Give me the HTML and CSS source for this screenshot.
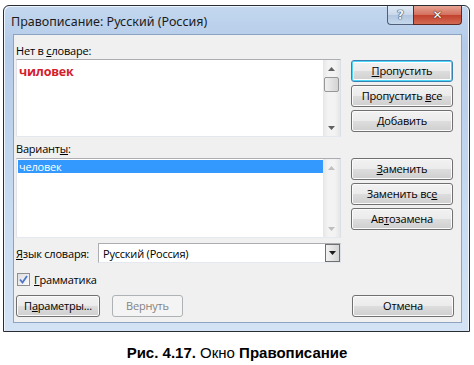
FILE: index.html
```html
<!DOCTYPE html>
<html lang="ru">

<head>
    <meta charset="UTF-8" />
    <title>Правописание</title>
    <link rel="stylesheet" href="styles.css">
</head>

<body>
    <div class="window">
        <div class="titlebar">
            <span class="title">Правописание: Русский (Россия)</span>
            <div class="caption-btns">
                <span class="cap-help">?</span>
                <span class="cap-exit">✕</span>
            </div>
        </div>

        <div class="client">
            <p class="label first">Нет в <u>с</u>ловаре:</p>
            <div class="row">
                <div class="box">
                    <div class="box-text"><span class="bad-word">чиловек</span></div>
                    <div class="scrollbar">
                        <div class="arrow"><svg width="7" height="4" viewBox="0 0 7 4"><polygon points="0,4 7,4 3.5,0" fill="#606060" /></svg></div>
                        <div class="thumb"></div>
                        <div class="track"></div>
                        <div class="arrow"><svg width="7" height="4" viewBox="0 0 7 4"><polygon points="0,0 7,0 3.5,4" fill="#606060" /></svg></div>
                    </div>
                </div>
                <div class="btn-col top">
                    <button class="btn default"><u>П</u>ропустить</button>
                    <button class="btn">Пропустить <u>в</u>се</button>
                    <button class="btn"><u>Д</u>обавить</button>
                </div>
            </div>

            <p class="label second">Вариант<u>ы</u>:</p>
            <div class="row">
                <div class="box list">
                    <div class="box-text">
                        <div class="selected">человек</div>
                    </div>
                    <div class="scrollbar">
                        <div class="arrow"><svg width="7" height="4" viewBox="0 0 7 4"><polygon points="0,4 7,4 3.5,0" fill="#bfbfbf" /></svg></div>
                        <div class="track"></div>
                        <div class="arrow"><svg width="7" height="4" viewBox="0 0 7 4"><polygon points="0,0 7,0 3.5,4" fill="#bfbfbf" /></svg></div>
                    </div>
                </div>
                <div class="btn-col">
                    <button class="btn"><u>З</u>аменить</button>
                    <button class="btn">Заменить вс<u>е</u></button>
                    <button class="btn">Ав<u>т</u>озамена</button>
                </div>
            </div>

            <div class="lang-row">
                <span class="lang-label"><u>Я</u>зык словаря:</span>
                <div class="combo">
                    <span class="combo-text">Русский (Россия)</span>
                    <div class="combo-btn"><svg width="7" height="4" viewBox="0 0 7 4"><polygon points="0,0 7,0 3.5,4" fill="#1a1a1a" /></svg></div>
                </div>
            </div>

            <div class="check-row">
                <div class="checkbox">
                    <svg width="9" height="9" viewBox="0 0 9 9"><path d="M1 4.5 L3.5 7.5 L8 1" fill="none" stroke="#4f74c8" stroke-width="1.8" /></svg>
                </div>
                <span><u>Г</u>рамматика</span>
            </div>

            <div class="bottom-row">
                <button class="btn params">П<u>а</u>раметры...</button>
                <button class="btn disabled-btn">Вернуть</button>
                <button class="btn cancel">Отмена</button>
            </div>
        </div>
    </div>

    <p class="caption"><b>Рис. 4.17.</b> Окно <b>Правописание</b></p>
</body>

</html>
```

FILE: styles.css
```css
* {
    margin: 0;
    padding: 0;
    box-sizing: border-box;
}

body {
    width: 474px;
    height: 365px;
    background: #ffffff;
    font-family: "Open Sans", "Noto Sans", sans-serif;
    font-size: 11px;
    letter-spacing: -0.2px;
    color: #000;
    overflow: hidden;
}

u {
    text-decoration: underline;
    text-underline-offset: 1px;
}

.window {
    margin: 5px 4px 0 3px;
    height: 327px;
    border: 1px solid #2a2d33;
    border-radius: 6px 6px 0 0;
    background: linear-gradient(#c3d7ef, #b4cbe8 12%, #c6daf1 60%, #d3e3f5);
    padding-bottom: 8px;
    box-shadow: inset 1px 1px 0 #eef5fc, inset -1px 0 0 #eef5fc;
}

.titlebar {
    height: 28px;
    display: flex;
    align-items: flex-start;
    padding: 0 7px;
}

.title {
    flex: 1;
    font-family: "Noto Sans", sans-serif;
    font-size: 12.5px;
    letter-spacing: 0;
    line-height: 16px;
    margin-top: 8px;
    color: #1c1c1c;
}

.caption-btns {
    display: flex;
    height: 19px;
}

.cap-help,
.cap-exit {
    display: flex;
    align-items: center;
    justify-content: center;
    height: 19px;
    font-family: "DejaVu Sans", sans-serif;
    font-weight: bold;
    letter-spacing: 0;
}

.cap-help {
    width: 26px;
    border: 1px solid #4f5f77;
    border-top: 0;
    border-right: 0;
    border-radius: 0 0 0 4px;
    background: linear-gradient(#e2ebf5, #c7d7ea 50%, #b2c6de 51%, #c5d8ec);
    font-size: 12px;
    color: #eef3f9;
    text-shadow: 0 0 1px #324866, 0 0 1px #324866, 0 0 1px #324866;
}

.cap-exit {
    width: 49px;
    border: 1px solid #5e2a22;
    border-top: 0;
    border-radius: 0 0 4px 0;
    background: linear-gradient(#e8a493, #d36e5c 50%, #c2412e 51%, #d26a52);
    font-size: 12px;
    color: #ffffff;
    text-shadow: 0 0 1px #5a1a12, 0 0 1px #5a1a12, 0 0 1px #5a1a12;
}

.client {
    margin: 0 7px 0 9px;
    height: 289px;
    border: 1px solid #8da3c1;
    background: #f0f0f0;
    padding: 0 7px 0 2px;
}

.label {
    line-height: 14px;
}

.label.first {
    padding-top: 9px;
    margin-bottom: 1px;
}

.label.second {
    padding-top: 5px;
    margin-bottom: 2px;
}

.row {
    display: flex;
    gap: 10px;
}

.box {
    width: 325px;
    height: 78px;
    border: 1px solid #abadb3;
    border-right-color: #dbdfe6;
    border-bottom-color: #e3e9ef;
    border-left-color: #e2e3ea;
    background: #fff;
    display: flex;
}

.box.list {
    height: 80px;
}

.box-text {
    flex: 1;
    padding: 1px 0 0 1px;
}

.bad-word {
    display: block;
    padding: 3px 0 0 1px;
    color: #d4202c;
    font-weight: bold;
    font-size: 12.5px;
    line-height: 16px;
}

.selected {
    background: #3399ff;
    color: #fff;
    line-height: 13px;
    height: 13px;
    padding-left: 1px;
}

.scrollbar {
    width: 17px;
    background: linear-gradient(90deg, #e6e6e6, #f3f3f3 30%, #f3f3f3 70%, #e6e6e6);
    display: flex;
    flex-direction: column;
}

.arrow {
    height: 17px;
    display: flex;
    align-items: center;
    justify-content: center;
}

.thumb {
    height: 15px;
    margin: 0 1px 0 1px;
    border: 1px solid #979797;
    border-radius: 2px;
    background: linear-gradient(90deg, #f0f0f0, #e2e2e2 50%, #d4d4d4);
}

.track {
    flex: 1;
}

.btn-col {
    display: flex;
    flex-direction: column;
    gap: 3px;
}

.btn-col.top {
    margin-top: 1px;
}

.btn {
    width: 102px;
    height: 22px;
    border: 1px solid #707070;
    border-radius: 3px;
    background: linear-gradient(#f2f2f2, #ebebeb 50%, #dddddd 51%, #cfcfcf);
    box-shadow: inset 0 0 0 1px #fbfbfb;
    font-family: "Open Sans", "Noto Sans", sans-serif;
    font-size: 11px;
    letter-spacing: -0.2px;
    line-height: 18px;
    color: #000;
}

.btn.default {
    border-color: #3c7fb1;
    box-shadow: inset 0 0 0 1px #48d7f8, inset 0 0 0 2px #ffffff;
}

.lang-row {
    display: flex;
    align-items: center;
    margin-top: 5px;
    height: 20px;
}

.lang-label {
    width: 82px;
    flex-shrink: 0;
    white-space: nowrap;
}

.combo {
    width: 243px;
    height: 20px;
    border: 1px solid #abadb3;
    border-right-color: #dbdfe6;
    border-bottom-color: #e3e9ef;
    background: #fff;
    display: flex;
    align-items: center;
    justify-content: space-between;
    padding-left: 4px;
}

.combo-btn {
    width: 15px;
    height: 18px;
    border: 1px solid #707070;
    background: linear-gradient(90deg, #f2f2f2, #e4e4e4 50%, #d4d4d4);
    display: flex;
    align-items: center;
    justify-content: center;
}

.check-row {
    display: flex;
    align-items: center;
    gap: 4px;
    margin-top: 10px;
    height: 13px;
    padding-left: 1px;
}

.checkbox {
    width: 13px;
    height: 13px;
    border: 1px solid #8e8f8f;
    background: linear-gradient(135deg, #dedede, #fbfbfb);
    display: flex;
    align-items: center;
    justify-content: center;
}

.bottom-row {
    display: flex;
    margin-top: 9px;
}

.btn.params {
    width: 84px;
}

.btn.disabled-btn {
    width: 71px;
    margin-left: 12px;
    border-color: #adb2b5;
    background: #f4f4f4;
    box-shadow: none;
    color: #838383;
}

.btn.cancel {
    margin-left: auto;
}

.caption {
    margin-top: 12px;
    text-align: center;
    font-family: "Liberation Sans", Arial, sans-serif;
    font-size: 15px;
    letter-spacing: 0;
    line-height: 17px;
}
```
